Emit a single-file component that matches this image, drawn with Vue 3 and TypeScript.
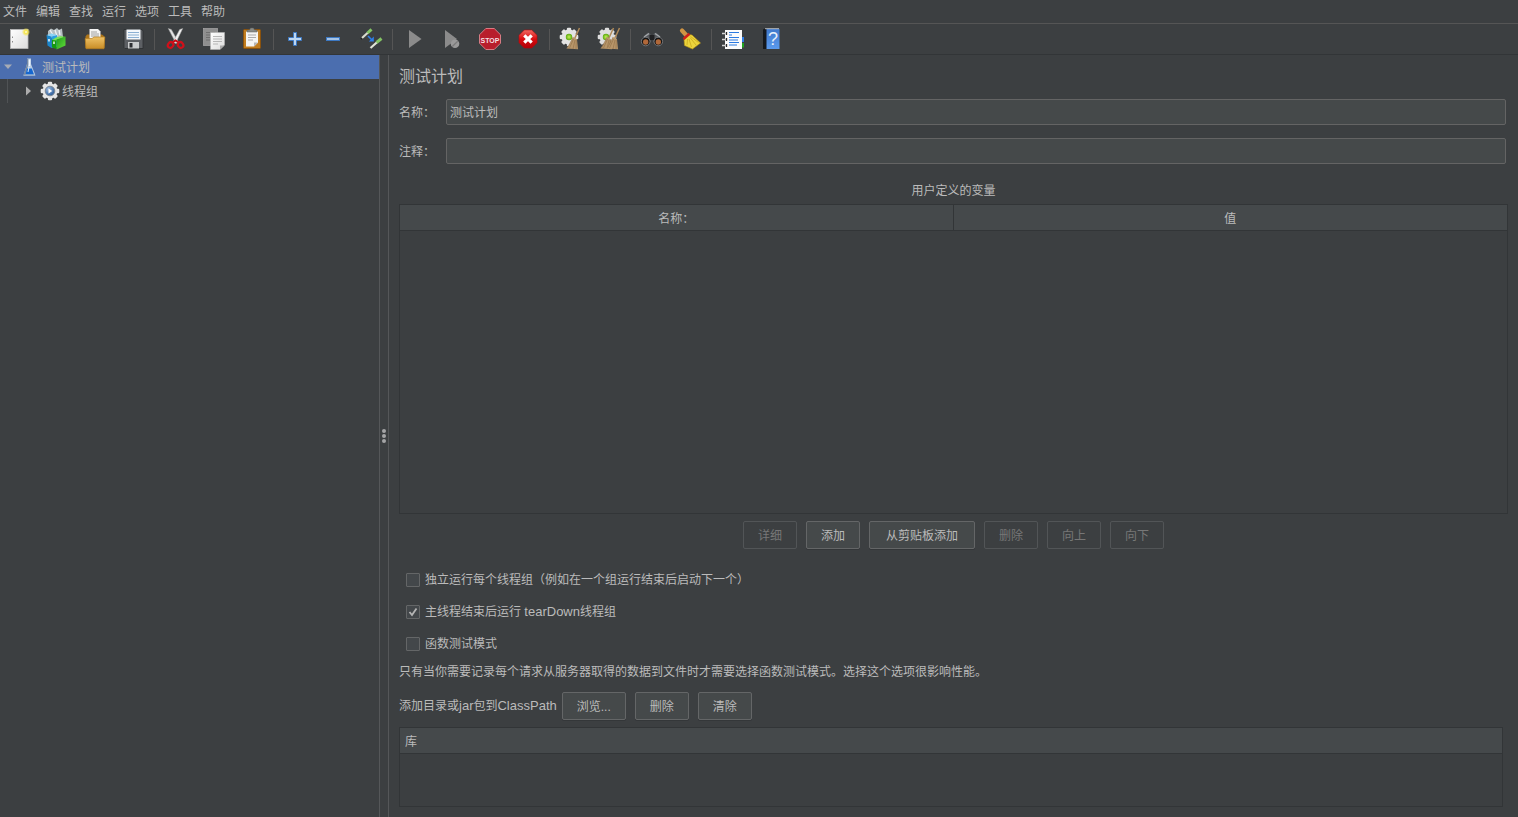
<script setup lang="ts">
import { ref } from 'vue'

interface Tool {
  id: string
  label: string
}

const menus: string[] = ['文件', '编辑', '查找', '运行', '选项', '工具', '帮助']

const toolGroups: Tool[][] = [
  [
    { id: 'new', label: '新建' },
    { id: 'templates', label: '模板' },
    { id: 'open', label: '打开' },
    { id: 'save', label: '保存' },
  ],
  [
    { id: 'cut', label: '剪切' },
    { id: 'copy', label: '复制' },
    { id: 'paste', label: '粘贴' },
  ],
  [
    { id: 'expand', label: '全部展开' },
    { id: 'collapse', label: '全部折叠' },
    { id: 'toggle', label: '切换' },
  ],
  [
    { id: 'start', label: '启动' },
    { id: 'start-no-pause', label: '不停顿开始' },
    { id: 'stop', label: '停止' },
    { id: 'shutdown', label: '关闭' },
  ],
  [
    { id: 'clear', label: '清除' },
    { id: 'clear-all', label: '清除全部' },
  ],
  [
    { id: 'search', label: '查找' },
    { id: 'search-reset', label: '重置查找' },
  ],
  [
    { id: 'functions', label: '函数助手' },
    { id: 'help', label: '帮助' },
  ],
]

const variableActions = [
  { text: '详细', disabled: true },
  { text: '添加', disabled: false },
  { text: '从剪贴板添加', disabled: false, wide: true },
  { text: '删除', disabled: true },
  { text: '向上', disabled: true },
  { text: '向下', disabled: true },
]

const gearTeeth = [0, 45, 90, 135, 180, 225, 270, 315]

const planName = ref('测试计划')
const comments = ref('')
const serialize = ref(false)
const tearDown = ref(true)
const functional = ref(false)
</script>

<template>
  <div class="app">
    <svg class="defs" aria-hidden="true">
      <defs>
        <linearGradient id="g-paper" x1="0" y1="0" x2="1" y2="1">
          <stop offset="0" stop-color="#ffffff" />
          <stop offset="1" stop-color="#dcdcdc" />
        </linearGradient>
        <linearGradient id="g-folder" x1="0" y1="0" x2="0" y2="1">
          <stop offset="0" stop-color="#efc267" />
          <stop offset="1" stop-color="#c98d26" />
        </linearGradient>
        <linearGradient id="g-green" x1="0" y1="0" x2="1" y2="1">
          <stop offset="0" stop-color="#1f9a1c" />
          <stop offset="1" stop-color="#63df3a" />
        </linearGradient>
        <linearGradient id="g-red" x1="0" y1="0" x2="0" y2="1">
          <stop offset="0" stop-color="#f06a62" />
          <stop offset="0.5" stop-color="#d80d10" />
          <stop offset="1" stop-color="#b00008" />
        </linearGradient>
        <linearGradient id="g-book" x1="0" y1="0" x2="0" y2="1">
          <stop offset="0" stop-color="#3f78cc" />
          <stop offset="1" stop-color="#5b9bee" />
        </linearGradient>
        <radialGradient id="g-glow">
          <stop offset="0" stop-color="#fffef0" />
          <stop offset="0.4" stop-color="#f6e54b" />
          <stop offset="1" stop-color="#f6e54b" stop-opacity="0" />
        </radialGradient>
        <radialGradient id="g-lime">
          <stop offset="0" stop-color="#c6f25a" />
          <stop offset="1" stop-color="#5aa80c" />
        </radialGradient>
        <radialGradient id="g-hub" cx="0.35" cy="0.3" r="0.8">
          <stop offset="0" stop-color="#9dbbdf" />
          <stop offset="1" stop-color="#1f5292" />
        </radialGradient>
        <g id="gear">
          <rect v-for="a in gearTeeth" :key="a" x="-2.2" y="-9.3" width="4.4" height="5" rx="1.2" :transform="`rotate(${a})`" />
          <circle r="7.4" />
        </g>
        <g id="whisk">
          <path d="M10.500 -9L5 3" stroke="#b08a58" stroke-width="1.500" fill="none" />
          <path d="M3.600 -.2L8 2.200L9 12.200L-2.600 11.600C0 8 2.400 5 3.600 -.2Z" fill="#b8966a" />
          <path d="M4.500 2L.5 11M6 3L4 12M7.300 3L7 12M3.400 1.500L-1.500 11" stroke="#86663e" stroke-width=".5" fill="none" />
        </g>
      </defs>
    </svg>

    <nav class="menubar">
      <button v-for="m in menus" :key="m" type="button" class="menu">{{ m }}</button>
    </nav>

    <div class="toolbar" role="toolbar">
      <div v-for="(group, gi) in toolGroups" :key="gi" class="group">
        <button v-for="t in group" :key="t.id" type="button" class="tool" :aria-label="t.label">
          <svg viewBox="0 0 24 24" width="24" height="24">
            <template v-if="t.id === 'new'">
              <rect x="3.500" y="2.500" width="17.500" height="19" fill="url(#g-paper)" stroke="#b9b9b9" stroke-width=".8" />
              <path d="M5.500 9.500v1.500M5.500 14v1.500" stroke="#8c8c8c" />
              <circle cx="19" cy="5" r="4.200" fill="url(#g-glow)" />
            </template>
            <template v-else-if="t.id === 'templates'">
              <path d="M3 4L6 1.500L9 3L12 1L14 3L17 1.500L18 10L8 12L3 9Z" fill="#b7c0c3" />
              <path d="M5 3l3 5M10 3l2 6M14 3l1 5" stroke="#eef2f3" stroke-width="1.300" />
              <path d="M1.500 8L6.500 9.500V21L2.500 18.500Z" fill="#1b86cc" />
              <path d="M6.500 9.500L12 8V20L6.500 21Z" fill="#27a0e2" />
              <path d="M1.500 8L6.500 6.500L12 8L6.500 9.500Z" fill="#8ad4f7" />
              <path d="M7 13L11.500 11.500V22L7 20.500Z" fill="#15990f" />
              <path d="M7 13L11 10.500L16 9L20.500 10L11.500 13.500Z" fill="#7be35a" />
              <path d="M11.500 12.500L20.500 9.500V18.500L11.500 22.500Z" fill="url(#g-green)" />
              <path d="M9 14.500v2.500M4 12v2.500" stroke="#fff" stroke-width="1.400" />
            </template>
            <template v-else-if="t.id === 'open'">
              <path d="M2.500 9.500L4 7.500H19L21.500 9.500V21H2.500Z" fill="#ad751a" />
              <path d="M6.500 2H15L17.500 4.500V13H6.500Z" fill="#f4f4f4" />
              <path d="M8 5h6M8 7h8M8 9h8" stroke="#8d8d8d" stroke-width=".8" />
              <path d="M2.200 11.500H9L11 10H21.800L21 21.700H3Z" fill="url(#g-folder)" stroke="#b57e21" stroke-width=".7" />
            </template>
            <template v-else-if="t.id === 'save'">
              <path d="M3 2.500H21L22 4V21.500H4L3 20.500Z" fill="#5c5f63" stroke="#2b2d30" stroke-width=".8" />
              <rect x="5.500" y="2.500" width="14" height="10" fill="#f3f7fb" />
              <path d="M7 5.500h11M7 8h11M7 10.500h11" stroke="#7fa7ce" stroke-width=".9" />
              <rect x="7" y="15" width="11" height="6.500" fill="#c9cbcc" />
              <rect x="8.500" y="16" width="3" height="4.500" fill="#2c2e31" />
            </template>
            <template v-else-if="t.id === 'cut'">
              <path d="M4.300 1.500L7.300 2.500L14.500 15L12 16.500Z" fill="#e3e3e3" stroke="#a5a5a5" stroke-width=".5" />
              <path d="M18.700 1.500L15.700 2.500L9 15L11.500 16.500Z" fill="#f1f1f1" stroke="#a5a5a5" stroke-width=".5" />
              <path d="M8.500 15.500L11.500 13.500L14.800 15.500" stroke="#c90b14" stroke-width="2" fill="none" />
              <ellipse cx="6.600" cy="18" rx="2.600" ry="3" fill="none" stroke="#d0101a" stroke-width="2.200" transform="rotate(35 6.600 18)" />
              <ellipse cx="16.600" cy="18" rx="2.600" ry="3" fill="none" stroke="#d0101a" stroke-width="2.200" transform="rotate(-35 16.600 18)" />
            </template>
            <template v-else-if="t.id === 'copy'">
              <rect x="1.500" y="1.500" width="14" height="17" fill="#8f8f8f" stroke="#a8a8a8" stroke-width=".7" />
              <path d="M4 5.500h9M4 8h9M4 10.500h4M4 13h4" stroke="#6b6b6b" stroke-width=".9" />
              <path d="M8.500 5.500H22.500V18L18 22.500H8.500Z" fill="url(#g-paper)" stroke="#b4b4b4" stroke-width=".6" />
              <path d="M11 9.500h9M11 12h9M11 14.500h9M11 17h5" stroke="#b0b0b0" stroke-width=".9" />
              <path d="M18 22.500V18.500H22.500Z" fill="#a9a9a9" />
            </template>
            <template v-else-if="t.id === 'paste'">
              <rect x="3.500" y="2.500" width="17" height="19" rx="1" fill="#c07c1e" stroke="#8a520d" />
              <path d="M6 4.500H18V15.500L14 19.500H6Z" fill="#f4f4f2" />
              <path d="M8 8h8M8 10.500h8M8 13h5" stroke="#a9a9a9" />
              <path d="M14 19.500V15.500H18Z" fill="#b5b5b5" />
              <path d="M7 5V3H9.500L10.500 1H13.500L14.500 3H17V5Z" fill="#8a8c88" stroke="#5b5d59" stroke-width=".5" />
            </template>
            <template v-else-if="t.id === 'expand'">
              <path d="M10.500 5.500h3v5h5v3h-5v5h-3v-5h-5v-3h5Z" fill="#bcd6f2" stroke="#3c78c2" />
            </template>
            <template v-else-if="t.id === 'collapse'">
              <rect x="5.500" y="10.500" width="13" height="3" fill="#a5c3e6" stroke="#3c78c2" />
            </template>
            <template v-else-if="t.id === 'toggle'">
              <path d="M2 12L4 10" stroke="#222" stroke-width="2" />
              <path d="M3 11L9 5.500" stroke="#d9dccf" stroke-width="2.200" />
              <path d="M8.500 6L12.500 2.300" stroke="#83c465" stroke-width="3" />
              <path d="M11.500 21L18 15.200" stroke="#e2e5d8" stroke-width="2.200" />
              <path d="M17.500 15.500L22.500 11.500" stroke="#83c465" stroke-width="3" />
              <path d="M9 9L13 13" stroke="#2f7fe8" stroke-width="1.600" />
              <path d="M14.800 9.500V14.500H9.800Z" fill="#2f7fe8" />
            </template>
            <template v-else-if="t.id === 'start'">
              <path d="M7 3L19.500 12L7 21Z" fill="#8b8b8b" />
            </template>
            <template v-else-if="t.id === 'start-no-pause'">
              <path d="M5 3L17 12L5 21Z" fill="#8b8b8b" />
              <circle cx="15" cy="16.800" r="4.300" fill="#9a9a9a" />
              <path d="M12.300 19.500L17.700 14.200" stroke="#7a7a7a" stroke-width="1.200" />
            </template>
            <template v-else-if="t.id === 'stop'">
              <path d="M7.800 1.500H16.200L22.500 7.800V16.200L16.200 22.500H7.800L1.500 16.200V7.800Z" fill="#b81e2c" stroke="#d67c84" />
              <text x="12" y="15.500" text-anchor="middle" class="stop-text">STOP</text>
            </template>
            <template v-else-if="t.id === 'shutdown'">
              <path d="M8.300 3H15.700L21 8.300V15.700L15.700 21H8.300L3 15.700V8.300Z" fill="url(#g-red)" stroke="#b5080c" stroke-width=".6" stroke-linejoin="round" />
              <path d="M8.300 8.300L15.700 15.700M15.700 8.300L8.300 15.700" stroke="#fff" stroke-width="3.200" />
            </template>
            <template v-else-if="t.id === 'clear'">
              <use href="#gear" transform="translate(10 10)" fill="#e4e4e4" />
              <circle cx="10" cy="10" r="3.200" fill="url(#g-lime)" />
              <use href="#whisk" transform="translate(10 10)" />
            </template>
            <template v-else-if="t.id === 'clear-all'">
              <use href="#gear" transform="translate(10 10)" fill="#dedede" />
              <circle cx="9" cy="10" r="3.200" fill="url(#g-lime)" />
              <use href="#whisk" transform="translate(6 10)" />
              <use href="#whisk" transform="translate(12 10)" />
            </template>
            <template v-else-if="t.id === 'search'">
              <path d="M5 8L8 5.500L10.500 7V15H2Z" fill="#55585c" />
              <path d="M19 8L16 5.500L13.500 7V15H22Z" fill="#55585c" />
              <path d="M4 10L9 6.500M15 6.500L20 10" stroke="#a3a6a9" stroke-width="1.500" />
              <rect x="9.500" y="8" width="5" height="5" fill="#202123" />
              <circle cx="5.700" cy="14.500" r="4.300" fill="#141414" stroke="#85888b" stroke-width=".8" />
              <circle cx="18.300" cy="14.500" r="4.300" fill="#141414" stroke="#85888b" stroke-width=".8" />
              <circle cx="5.700" cy="15" r="2.700" fill="#b0683a" />
              <circle cx="18.300" cy="15" r="2.700" fill="#b0683a" />
            </template>
            <template v-else-if="t.id === 'search-reset'">
              <path d="M4 3.500L8.500 8.500" stroke="#cf9444" stroke-width="4.200" stroke-linecap="round" />
              <path d="M10.500 7.500L14 8L22.500 16L14.500 22L6.500 18.500L6 12Z" fill="#ecd43c" stroke="#b89410" stroke-width=".6" />
              <path d="M9.500 12L9 18M11 12L13.500 20M12 10.500L18 18M12.500 9.500L20.500 15.500" stroke="#c6a31a" stroke-width=".7" fill="none" />
              <path d="M5.500 12L11.500 6.800" stroke="#cf1f1a" stroke-width="2.600" />
            </template>
            <template v-else-if="t.id === 'functions'">
              <rect x="20" y="10" width="3" height="5" fill="#2f7fe8" />
              <rect x="20" y="16" width="3" height="4.500" fill="#1fa51f" />
              <rect x="4" y="3" width="17" height="19" fill="#fbfbfb" />
              <path d="M8 5.500h10M8 10.500h10M8 15.500h10" stroke="#2a79e0" />
              <path d="M8 8h3M8 13h9M8 18h8" stroke="#2a79e0" />
              <path d="M1 6.500h5M1 12.500h5M1 18.500h5" stroke="#d5d5d5" stroke-width="1.600" />
              <path d="M5.500 5v3M5.500 11v3M5.500 17v3" stroke="#2b2b2b" stroke-width="1.300" />
            </template>
            <template v-else>
              <path d="M4 2.500L6 1.500H8.500V22H4Z" fill="#15181c" />
              <rect x="7.500" y="2" width="13" height="20" fill="url(#g-book)" />
              <path d="M6 1.700H20" stroke="#d7dce2" stroke-width=".8" />
              <text x="14" y="17.500" text-anchor="middle" class="help-text">?</text>
            </template>
          </svg>
        </button>
      </div>
    </div>

    <main class="workspace">
      <aside class="tree" role="tree">
        <div class="node selected" role="treeitem" aria-expanded="true">
          <svg class="arrow" viewBox="0 0 16 16" width="16" height="16"><path d="M4 5.500H12L8 10Z" fill="#a6abb5" /></svg>
          <svg class="node-icon" viewBox="0 0 20 20" width="20" height="20">
            <path d="M8 1.500H12V7L16.500 18.500H4.500L8 7Z" fill="#b9cde4" />
            <path d="M8 1.500H9.300V7.500L6.500 18H4.500L8 7Z" fill="#7488a2" />
            <path d="M8 11.500H12.800L15 17.500H6.500Z" fill="#1567cf" />
            <path d="M10.500 2.500V9" stroke="#f4f8fc" stroke-width="1.500" />
            <path d="M10 10L9 15" stroke="#dbe8f6" />
            <path d="M4.500 18.200H16" stroke="#9fb2c9" />
          </svg>
          <span>测试计划</span>
        </div>
        <div class="node child" role="treeitem" aria-expanded="false">
          <svg class="arrow" viewBox="0 0 16 16" width="16" height="16"><path d="M6 3.500V12.500L11 8Z" fill="#adadad" /></svg>
          <svg class="node-icon" viewBox="0 0 20 20" width="20" height="20">
            <use href="#gear" transform="translate(10 10)" fill="#e6e6e6" />
            <circle cx="10" cy="10" r="4.800" fill="url(#g-hub)" stroke="#7d8894" />
            <path d="M8.500 7.500L12.300 10L8.500 12.500Z" fill="#fff" />
          </svg>
          <span>线程组</span>
        </div>
      </aside>

      <div class="splitter" role="separator" aria-orientation="vertical">
        <i></i><i></i><i></i>
      </div>

      <section class="panel">
        <h1>测试计划</h1>
        <div class="field">
          <label for="plan-name">名称：</label>
          <input id="plan-name" v-model="planName" type="text" />
        </div>
        <div class="field">
          <label for="plan-comments">注释：</label>
          <input id="plan-comments" v-model="comments" type="text" />
        </div>

        <h2 id="vars-title">用户定义的变量</h2>
        <div class="grid vars">
          <table aria-labelledby="vars-title">
            <thead>
              <tr>
                <th>名称：</th>
                <th>值</th>
              </tr>
            </thead>
          </table>
        </div>

        <div class="actions">
          <button
            v-for="a in variableActions"
            :key="a.text"
            type="button"
            class="btn"
            :class="{ wide: a.wide }"
            :disabled="a.disabled"
          >{{ a.text }}</button>
        </div>

        <div class="options">
          <label><input v-model="serialize" type="checkbox" /><span>独立运行每个线程组（例如在一个组运行结束后启动下一个）</span></label>
          <label><input v-model="tearDown" type="checkbox" /><span>主线程结束后运行 <span class="latin">tearDown</span>线程组</span></label>
          <label><input v-model="functional" type="checkbox" /><span>函数测试模式</span></label>
        </div>
        <p class="note">只有当你需要记录每个请求从服务器取得的数据到文件时才需要选择函数测试模式。选择这个选项很影响性能。</p>

        <div class="classpath">
          <span class="cp-label">添加目录或<span class="latin">jar</span>包到<span class="latin">ClassPath</span></span>
          <button type="button" class="btn">浏览...</button>
          <button type="button" class="btn">删除</button>
          <button type="button" class="btn">清除</button>
        </div>
        <div class="grid libs">
          <table>
            <thead>
              <tr>
                <th>库</th>
              </tr>
            </thead>
          </table>
        </div>
      </section>
    </main>
  </div>
</template>

<style>
body {
  margin: 0;
  background: #3c3f41;
}
</style>

<style scoped>
.app {
  display: flex;
  flex-direction: column;
  min-height: 100vh;
  background: #3c3f41;
  color: #bbbbbb;
  font: 12px/20px "Liberation Sans", "Noto Sans CJK SC", sans-serif;
}
.app * {
  box-sizing: border-box;
}
.defs {
  position: absolute;
  width: 0;
  height: 0;
}
button,
input {
  font: inherit;
  color: inherit;
}
.menubar {
  display: flex;
  gap: 9px;
  height: 24px;
  padding: 0 3px;
  border-bottom: 1px solid #555555;
}
.menu {
  padding: 0;
  border: 0;
  background: none;
  line-height: 22px;
}
.toolbar {
  display: flex;
  height: 31px;
  border-bottom: 1px solid #323537;
}
.group {
  display: flex;
}
.group + .group::before {
  content: "";
  width: 1px;
  margin: 5px 2px 4px;
  background: #555555;
}
.tool {
  display: flex;
  align-items: center;
  justify-content: center;
  width: 38px;
  height: 30px;
  padding: 0;
  border: 0;
  background: none;
}
.stop-text {
  font: bold 7px "Liberation Sans", sans-serif;
  fill: #f6dfe1;
}
.help-text {
  font: 18px "Liberation Sans", sans-serif;
  fill: #e8f0fb;
}
.workspace {
  display: flex;
  flex: 1;
}
.tree {
  width: 379px;
  flex: none;
}
.node {
  display: flex;
  align-items: center;
  height: 24px;
}
.node.selected {
  background: #4b6eaf;
}
.node.child {
  margin-left: 7px;
  padding-left: 12px;
  border-left: 1px solid #505355;
}
.node span,
.field label {
  padding-top: 2px;
}
.arrow {
  flex: none;
}
.node-icon {
  flex: none;
  margin: 0 3px;
}
.child .node-icon {
  margin: 0 2px 0 4px;
}
.splitter {
  display: flex;
  flex: none;
  flex-direction: column;
  align-items: center;
  justify-content: center;
  gap: 1px;
  width: 10px;
  border: solid #555759;
  border-width: 0 1px;
}
.splitter i {
  width: 4px;
  height: 4px;
  border-radius: 2px;
  background: #a4a5a6;
}
.panel {
  display: flex;
  flex: 1;
  flex-direction: column;
  min-width: 0;
  padding: 11px 10px 10px;
}
h1,
h2,
p {
  margin: 0;
  font-weight: normal;
}
h1 {
  font-size: 16px;
  line-height: 22px;
}
h2 {
  margin: 16px 0 2px;
  font-size: 12px;
  line-height: 22px;
  text-align: center;
}
.field {
  display: flex;
  align-items: center;
  margin: 13px 2px 0 0;
}
h1 + .field {
  margin-top: 11px;
}
.field label {
  flex: none;
  width: 47px;
}
.field input {
  flex: 1;
  min-width: 0;
  height: 26px;
  padding: 0 3px 1px;
  border: 1px solid #646464;
  border-radius: 2px;
  outline: 0;
  background: #45494a;
}
.grid {
  border: 1px solid #323537;
}
.grid table {
  width: 100%;
  border-collapse: separate;
  border-spacing: 0;
  table-layout: fixed;
}
.grid th {
  height: 26px;
  padding: 2px 0 0;
  border-bottom: 1px solid #323537;
  background: #45494b;
  font-weight: normal;
}
.grid th:not(:last-child) {
  border-right: 1px solid #323537;
}
.vars {
  flex: 1;
}
.libs {
  height: 80px;
  margin-right: 5px;
}
.libs th {
  padding-left: 5px;
  text-align: left;
}
.actions,
.classpath {
  display: flex;
  gap: 9px;
}
.actions {
  justify-content: center;
  margin: 7px 0 15px;
}
.btn {
  height: 28px;
  padding: 2px 14px 0;
  border: 1px solid #646667;
  border-radius: 2px;
  background: #45494a;
  box-shadow: 0 1px 0 #343739;
  white-space: nowrap;
}
.btn.wide {
  padding: 2px 16px 0;
}
.btn:disabled {
  border-color: #525557;
  background: none;
  box-shadow: none;
  color: #777777;
}
.options label {
  display: flex;
  align-items: center;
  gap: 5px;
  width: fit-content;
  height: 32px;
  padding-left: 7px;
}
.options input {
  flex: none;
  width: 14px;
  height: 14px;
  margin: 0;
  appearance: none;
  border: 1px solid #646667;
  border-radius: 1px;
  background: #43474a;
}
.options input:checked {
  background: #43474a
    url("data:image/svg+xml,%3Csvg xmlns='http://www.w3.org/2000/svg' viewBox='0 0 12 12'%3E%3Cpath d='M2.500 6L5 9L9.500 2.500' fill='none' stroke='%23b4b4b4' stroke-width='1.800'/%3E%3C/svg%3E");
}
.latin {
  font-size: 13px;
}
.note {
  margin-top: 2px;
}
.classpath {
  align-items: center;
  margin: 10px 0 7px;
}
.cp-label {
  margin-right: -4px;
}
</style>
